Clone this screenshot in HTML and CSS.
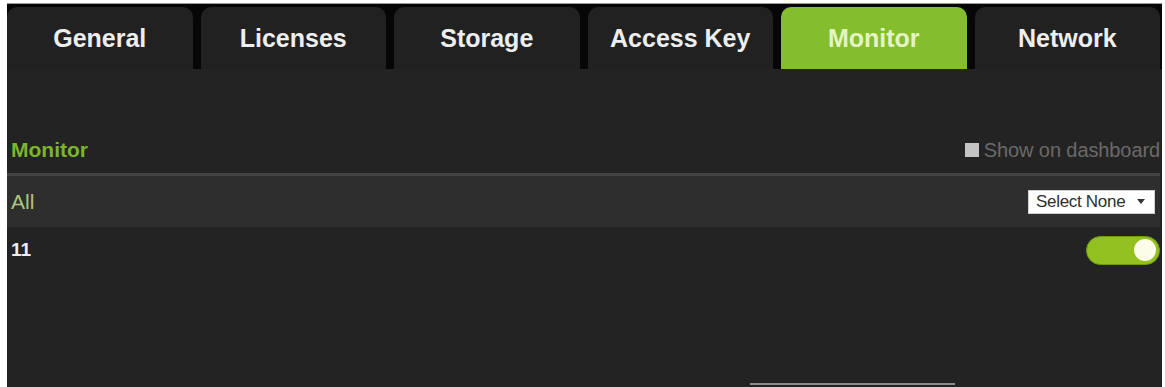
FILE: index.html
```html
<!DOCTYPE html>
<html>
<head>
<meta charset="utf-8">
<link rel="stylesheet" href="styles.css">
</head>
<body>
<div class="frame">
  <nav class="tabs">
    <div class="tab">General</div>
    <div class="tab">Licenses</div>
    <div class="tab">Storage</div>
    <div class="tab">Access Key</div>
    <div class="tab active">Monitor</div>
    <div class="tab">Network</div>
  </nav>
  <section class="panel">
    <div class="panel-head">
      <h2 class="title">Monitor</h2>
      <label class="dash"><span class="check"></span>Show on dashboard</label>
    </div>
    <div class="row all-row">
      <span class="all">All</span>
      <div class="select">Select None <span class="caret"></span></div>
    </div>
    <div class="row item-row">
      <span class="item">11</span>
      <div class="toggle"><span class="knob"></span></div>
    </div>
    <div class="footer"><div class="btn-edge"></div></div>
  </section>
</div>
</body>
</html>
```
FILE: styles.css
```css
html, body {
  margin: 0;
  padding: 0;
  background: #ffffff;
  font-family: "Liberation Sans", Arial, sans-serif;
}
.frame {
  margin: 3px 3px 0 7px;
  border-top: 1px solid #9a9a9a;
  background: #232323;
  height: 384px;
  overflow: hidden;
}
.tabs {
  display: flex;
  gap: 8px;
  background: #060606;
  padding-top: 3px;
  padding-right: 2px;
  height: 62px;
}
.tab {
  flex: 1;
  background: #212121;
  border-radius: 10px 10px 0 0;
  color: #eeeeee;
  font-weight: bold;
  font-size: 25px;
  line-height: 62px;
  text-align: center;
}
.tab.active {
  background: #84be2c;
  color: #e4f4c6;
}
.panel {
  padding-top: 66px;
  padding-right: 2px;
}
.panel-head {
  display: flex;
  justify-content: space-between;
  align-items: flex-start;
  height: 38px;
  padding-left: 4px;
}
.title {
  margin: 0;
  font-size: 21px;
  line-height: 30px;
  color: #7cb42b;
  font-weight: bold;
}
.dash {
  display: flex;
  align-items: center;
  gap: 5px;
  color: #6a6a6a;
  font-size: 20px;
  line-height: 30px;
  letter-spacing: -0.1px;
}
.check {
  width: 14px;
  height: 14px;
  background: #c4c4c4;
}
.row {
  display: flex;
  justify-content: space-between;
  align-items: center;
  padding-left: 4px;
}
.all-row {
  border-top: 3px solid #444444;
  background: #2e2e2e;
  height: 51px;
  padding-right: 5px;
}
.all {
  color: #a9c77e;
  font-size: 21px;
}
.select {
  display: flex;
  align-items: center;
  justify-content: space-between;
  box-sizing: border-box;
  width: 127px;
  height: 24px;
  background: #ffffff;
  border: 1px solid #d0d0d0;
  color: #2e2e2e;
  font-size: 17px;
  letter-spacing: -0.3px;
  padding: 0 9px 0 7px;
}
.caret {
  width: 0;
  height: 0;
  border-left: 4px solid transparent;
  border-right: 4px solid transparent;
  border-top: 5px solid #333333;
}
.item-row {
  height: 46px;
}
.item {
  color: #eeeeee;
  font-weight: bold;
  font-size: 19px;
}
.toggle {
  display: flex;
  justify-content: flex-end;
  align-items: center;
  box-sizing: border-box;
  width: 74px;
  height: 29px;
  border-radius: 15px;
  background: #93c11f;
  border: 1px solid #6f9a18;
  padding-right: 3px;
}
.knob {
  width: 22px;
  height: 22px;
  border-radius: 50%;
  background: #fbfde8;
}
.footer {
  display: flex;
  padding-top: 110px;
  padding-left: 743px;
}
.btn-edge {
  width: 205px;
  height: 2px;
  background: #8c8c8c;
}
```
